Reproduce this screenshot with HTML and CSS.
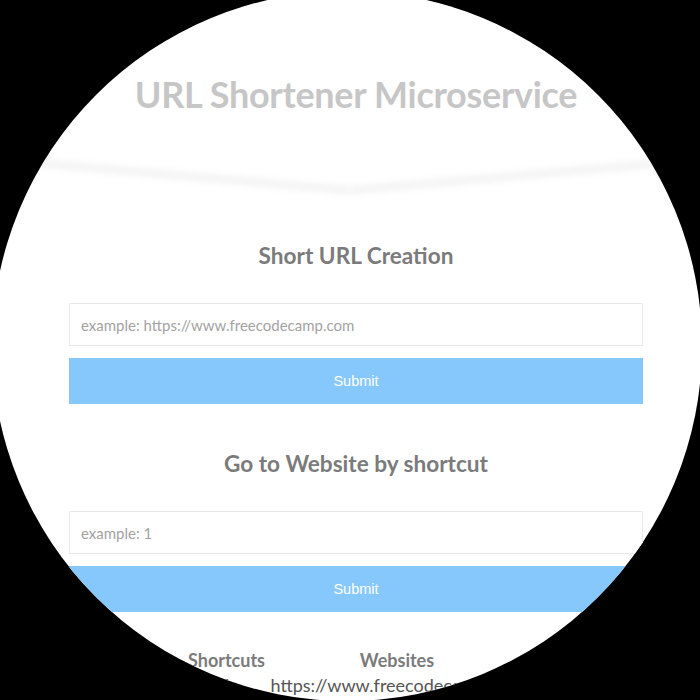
FILE: index.html
```html
<!DOCTYPE html>
<html>
<head>
<meta charset="utf-8">
<link rel="stylesheet" href="styles.css">
</head>
<body>
<div class="lens">
  <header class="header">
    <h1 class="title">URL Shortener Microservice</h1>
  </header>
  <div class="divider"><span class="fold fold-left"></span><span class="fold fold-right"></span></div>
  <main class="content">
    <section class="block">
      <h2 class="heading">Short URL Creation</h2>
      <form class="form">
        <input class="field" type="text" placeholder="example: https://www.freecodecamp.com">
        <button class="submit" type="button">Submit</button>
      </form>
    </section>
    <section class="block block-second">
      <h2 class="heading">Go to Website by shortcut</h2>
      <form class="form">
        <input class="field" type="text" placeholder="example: 1">
        <button class="submit" type="button">Submit</button>
      </form>
    </section>
    <table class="links">
      <thead>
        <tr><th class="col-short">Shortcuts</th><th>Websites</th></tr>
      </thead>
      <tbody>
        <tr><td class="col-short">1</td><td>https://www.freecodecamp.com</td></tr>
      </tbody>
    </table>
  </main>
</div>
</body>
</html>
```
FILE: styles.css
```css
html, body {
  margin: 0;
  padding: 0;
  background: #000;
}
body {
  width: 700px;
  height: 700px;
  overflow: hidden;
  font-family: Lato, "Open Sans", sans-serif;
}
.lens {
  width: 700px;
  height: 700px;
  background: #fff;
  clip-path: circle(355px at 347px 346px);
  overflow: hidden;
}
.header {
  padding-top: 72px;
  padding-left: 12px;
  text-align: center;
}
.title {
  margin: 0;
  font-size: 36px;
  line-height: 44px;
  font-weight: 700;
  color: #c6c6c6;
  letter-spacing: -0.3px;
}
.divider {
  height: 40px;
  margin-top: 40px;
  display: flex;
  justify-content: center;
  align-items: center;
}
.fold {
  width: 318px;
  height: 7px;
  background: rgba(0, 0, 0, 0.05);
  filter: blur(3px);
}
.fold-left { transform: rotate(5deg); }
.fold-right { transform: rotate(-5deg); }
.content {
  padding-top: 45px;
  display: flex;
  flex-direction: column;
  align-items: center;
}
.block {
  width: 574px;
  margin-left: 12px;
  display: flex;
  flex-direction: column;
  align-items: center;
}
.block-second {
  margin-top: 45px;
}
.heading {
  margin: 0 0 32px;
  font-size: 22.6px;
  line-height: 30px;
  font-weight: 700;
  color: #7b7b7b;
}
.form {
  width: 100%;
  display: flex;
  flex-direction: column;
  gap: 12px;
}
.field {
  box-sizing: border-box;
  width: 100%;
  height: 43px;
  margin: 0;
  padding: 0 11px;
  border: 1px solid #e8e8e8;
  border-radius: 0;
  font-family: Lato, sans-serif;
  font-size: 15px;
  color: #555;
  outline: none;
}
.field::placeholder {
  color: #a3a3a3;
}
.submit {
  width: 100%;
  height: 46px;
  margin: 0;
  border: none;
  border-radius: 0;
  background: #87c8fc;
  color: #fff;
  font-family: "Liberation Sans", Arial, sans-serif;
  font-size: 14.5px;
}
.links {
  margin-top: 36px;
  margin-left: 10px;
  border-collapse: collapse;
}
.links th {
  font-size: 18px;
  font-weight: 700;
  line-height: 25px;
  padding: 0 2px;
  color: #7b7b7b;
}
.links td {
  font-size: 18px;
  line-height: 25px;
  padding: 0 2px;
  text-align: center;
  color: #555;
}
.col-short {
  width: 80px;
}
```
